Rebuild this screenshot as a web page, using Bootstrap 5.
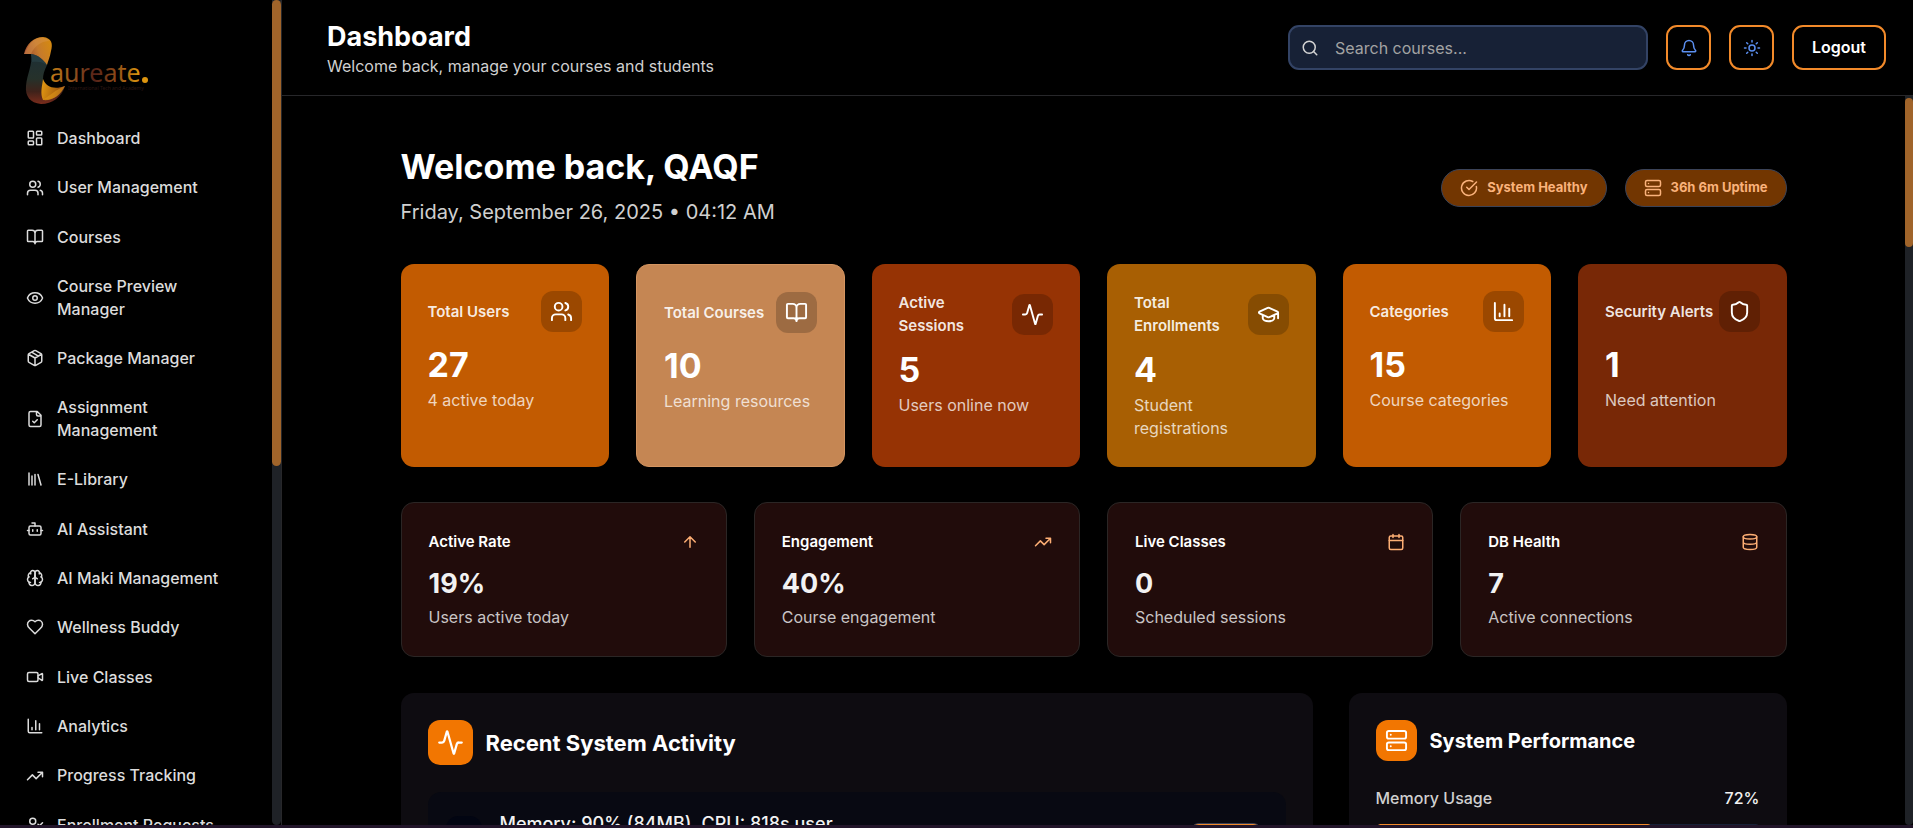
<!DOCTYPE html>
<html lang="en" data-bs-theme="dark">
<head>
<meta charset="utf-8">
<meta name="viewport" content="width=device-width, initial-scale=1">
<title>Dashboard</title>
<link href="https://cdn.jsdelivr.net/npm/bootstrap@5.3.0/dist/css/bootstrap.min.css" rel="stylesheet">
<style>
  body { background: #000; color: #f2f2f2; font: 400 16px/23px Inter, "Liberation Sans", sans-serif; }
  h1, h2, h3, p { margin: 0; }
  svg.ico { width: 18px; height: 18px; flex: none; fill: none; stroke: currentColor; stroke-width: 2; stroke-linecap: round; stroke-linejoin: round; }
  .base-strip { height: 3px; background: #22152a; }
  .min-h-zero { min-height: 0; }
  .gap-bar { gap: 18px; }

  .sidebar { width: 282px; border-right: 1px solid #27272a; }
  .brand { padding: 36px 24px 13px; }
  .side-nav { padding: 0 20px 0 26px; }
  .side-link { display: flex; align-items: center; gap: 13px; padding: 9px 0; margin-bottom: 9px; color: #dcdcdc; font-weight: 500; font-size: 16px; line-height: 1.4; text-decoration: none; }
  .side-link:hover { color: #fff; }
  .track { background: #1f2227; border-radius: 0 0 5px 5px; }
  .track-side { width: 9px; }
  .track-main { width: 8px; padding-top: 2px; }
  .thumb { background: #a0642a; border-radius: 5px; height: 466px; }
  .track-main .thumb { height: 149px; }

  .topbar { height: 96px; padding: 0 27px 0 45px; border-bottom: 1px solid #27272a; }
  .page-name { font-size: 27px; line-height: 36px; font-weight: 700; }
  .page-hint { line-height: 22px; }
  .muted { color: #d0d0d0; }
  .search-box { width: 360px; }
  .search-box svg { left: 13px; top: 14px; color: #d4d4d4; }
  .search-input { height: 45px; padding: 0 14px 0 45px; border: 2px solid #334365; border-radius: 11px; background: #172136; color: #eee; font-size: 16px; }
  .search-input::placeholder { color: #a3a3a3; }
  .btn-line { height: 45px; min-width: 45px; padding: 0; border: 2px solid #f28a2a; border-radius: 11px; color: #5b8ff0; }
  .btn-line.wide { padding: 0 18px 2px; color: #fff; font-weight: 600; font-size: 16px; }

  .page-body { max-width: 1440px; padding: 0 27px; }
  .hero { padding: 51px 0 36px; }
  .hero h2 { font-size: 34px; line-height: 40px; font-weight: 700; }
  .hero p { font-size: 20px; line-height: 32px; margin-top: 9px; }
  .status { height: 38px; padding: 0 18px; gap: 9px; border: 1px solid #3b4358; border-radius: 19px; background: #723601; color: #fab27b; font-size: 13px; font-weight: 700; }

  .stat-grid { display: grid; grid-template-columns: repeat(6, 1fr); gap: 27px; margin-bottom: 35px; }
  .mini-grid { display: grid; grid-template-columns: repeat(4, 1fr); gap: 27px; margin-bottom: 36px; }
  .panel-grid { display: grid; grid-template-columns: repeat(3, 1fr); gap: 36px; }
  .span-two { grid-column: span 2; }
  .tile { border-radius: 13px; padding: 27px; }
  .tile h3, .mini h3 { font-size: 15px; line-height: 23px; font-weight: 600; }
  .tile h3 { color: rgba(255,255,255,.9); }
  .tile .figure { font-size: 34px; line-height: 40px; font-weight: 700; color: #fff; margin: 13px 0 4px; }
  .tile .note { color: rgba(255,255,255,.75); }
  .tile-icon { width: 41px; height: 41px; border-radius: 12px; background: rgba(0,0,0,.2); color: #fff; flex: none; }
  .tile-icon svg { width: 23px; height: 23px; }
  .orange { background: #c25b01; }
  .peach { background: #c58653; border: 1px solid #d49561; }
  .rust { background: #963304; }
  .amber { background: #a85f03; }
  .brown { background: #782806; }
  .mini { border: 1px solid #2b2625; border-radius: 13px; padding: 27px; background: #210c0b; }
  .mini svg { color: #fdae74; }
  .mini .figure { font-size: 27px; line-height: 36px; font-weight: 700; margin: 13px 0 4px; }
  .mini .note { color: #c9c5c5; }

  .panel { background: #0e0c11; border-radius: 13px; padding: 27px; }
  .panel h3 { font-size: 22px; line-height: 32px; font-weight: 700; }
  .panel h3.lesser { font-size: 20px; }
  .panel-icon { width: 45px; height: 45px; border-radius: 12px; background: #f27601; color: #fff; flex: none; }
  .panel-icon svg { width: 27px; height: 27px; }
  .panel-icon.lesser { width: 41px; height: 41px; }
  .panel-icon.lesser svg { width: 23px; height: 23px; }
  .gap-title { gap: 13px; }
  .event { background: #080912; border-radius: 13px; padding: 18px 24px 18px 18px; margin-top: 27px; gap: 18px; }
  .event-icon { width: 36px; height: 36px; border-radius: 12px; background: #020512; margin-top: 6px; color: #5b8ff0; }
  .event-text { font-size: 18px; line-height: 27px; font-weight: 500; }
  .event-tag { margin-top: 13px; padding: 2px 12px; border: 1px solid #3b4358; border-radius: 9px; background: #f28a2a; color: #fff; font-size: 13px; font-weight: 600; }
  .meter-head { margin-top: 26px; font-weight: 500; }
  .meter { height: 9px; margin-top: 14px; background: #172136; border-radius: 5px; }
  .meter .progress-bar { background: #f28a2a; border-radius: 5px; }
</style>
</head>
<body class="vh-100 overflow-hidden d-flex flex-column">

<svg class="d-none" aria-hidden="true">
  <symbol id="i-grid" viewBox="0 0 24 24"><rect x="3" y="3" width="7" height="9" rx="1"/><rect x="14" y="3" width="7" height="5" rx="1"/><rect x="14" y="12" width="7" height="9" rx="1"/><rect x="3" y="16" width="7" height="5" rx="1"/></symbol>
  <symbol id="i-users" viewBox="0 0 24 24"><path d="M16 21v-2a4 4 0 0 0-4-4H6a4 4 0 0 0-4 4v2"/><circle cx="9" cy="7" r="4"/><path d="M22 21v-2a4 4 0 0 0-3-3.87M16 3.13a4 4 0 0 1 0 7.75"/></symbol>
  <symbol id="i-book" viewBox="0 0 24 24"><path d="M12 7v14M3 18a1 1 0 0 1-1-1V4a1 1 0 0 1 1-1h5a4 4 0 0 1 4 4 4 4 0 0 1 4-4h5a1 1 0 0 1 1 1v13a1 1 0 0 1-1 1h-6a3 3 0 0 0-3 3 3 3 0 0 0-3-3z"/></symbol>
  <symbol id="i-eye" viewBox="0 0 24 24"><path d="M2.062 12.348a1 1 0 0 1 0-.696 10.75 10.75 0 0 1 19.876 0 1 1 0 0 1 0 .696 10.75 10.75 0 0 1-19.876 0"/><circle cx="12" cy="12" r="3"/></symbol>
  <symbol id="i-box" viewBox="0 0 24 24"><path d="M11 21.73a2 2 0 0 0 2 0l7-4A2 2 0 0 0 21 16V8a2 2 0 0 0-1-1.73l-7-4a2 2 0 0 0-2 0l-7 4A2 2 0 0 0 3 8v8a2 2 0 0 0 1 1.73zM12 22V12M3.29 7 12 12l8.71-5M7.5 4.27l9 5.15"/></symbol>
  <symbol id="i-filecheck" viewBox="0 0 24 24"><path d="M15 2H6a2 2 0 0 0-2 2v16a2 2 0 0 0 2 2h12a2 2 0 0 0 2-2V7zM14 2v4a2 2 0 0 0 2 2h4M9 15l2 2 4-4"/></symbol>
  <symbol id="i-library" viewBox="0 0 24 24"><path d="m16 6 4 14M12 6v14M8 8v12M4 4v16"/></symbol>
  <symbol id="i-bot" viewBox="0 0 24 24"><path d="M12 8V4H8"/><rect x="4" y="8" width="16" height="12" rx="2"/><path d="M2 14h2M20 14h2M15 13v2M9 13v2"/></symbol>
  <symbol id="i-brain" viewBox="0 0 24 24"><path d="M12 5a3 3 0 1 0-5.997.125 4 4 0 0 0-2.526 5.77 4 4 0 0 0 .556 6.588A4 4 0 1 0 12 18Z"/><path d="M12 5a3 3 0 1 1 5.997.125 4 4 0 0 1 2.526 5.77 4 4 0 0 1-.556 6.588A4 4 0 1 1 12 18Z"/><path d="M15 13a4.5 4.5 0 0 1-3-4 4.5 4.5 0 0 1-3 4M17.599 6.5a3 3 0 0 0 .399-1.375M6.003 5.125A3 3 0 0 0 6.401 6.5M3.477 10.896a4 4 0 0 1 .585-.396M19.938 10.5a4 4 0 0 1 .585.396M6 18a4 4 0 0 1-1.967-.516M19.967 17.484A4 4 0 0 1 18 18"/></symbol>
  <symbol id="i-heart" viewBox="0 0 24 24"><path d="M19 14c1.49-1.46 3-3.21 3-5.5A5.5 5.5 0 0 0 16.500 3c-1.76 0-3 .5-4.500 2-1.500-1.500-2.740-2-4.500-2A5.500 5.500 0 0 0 2 8.500c0 2.300 1.500 4.050 3 5.500l7 7Z"/></symbol>
  <symbol id="i-video" viewBox="0 0 24 24"><path d="m16 13 5.223 3.482a.5.5 0 0 0 .777-.416V7.870a.5.5 0 0 0-.752-.432L16 10.500"/><rect x="2" y="6" width="14" height="12" rx="2"/></symbol>
  <symbol id="i-chart" viewBox="0 0 24 24"><path d="M3 3v16a2 2 0 0 0 2 2h16M18 17V9M13 17V5M8 17v-3"/></symbol>
  <symbol id="i-trend" viewBox="0 0 24 24"><path d="M22 7 13.500 15.500 8.500 10.500 2 17M16 7h6v6"/></symbol>
  <symbol id="i-userplus" viewBox="0 0 24 24"><path d="M16 21v-2a4 4 0 0 0-4-4H6a4 4 0 0 0-4 4v2"/><circle cx="9" cy="7" r="4"/><path d="m16 11 2 2 4-4"/></symbol>
  <symbol id="i-search" viewBox="0 0 24 24"><circle cx="11" cy="11" r="8"/><path d="m21 21-4.300-4.300"/></symbol>
  <symbol id="i-bell" viewBox="0 0 24 24"><path d="M10.268 21a2 2 0 0 0 3.464 0M3.262 15.326A1 1 0 0 0 4 17h16a1 1 0 0 0 .740-1.673C19.410 13.956 18 12.499 18 8A6 6 0 0 0 6 8c0 4.499-1.411 5.956-2.738 7.326"/></symbol>
  <symbol id="i-sun" viewBox="0 0 24 24"><circle cx="12" cy="12" r="4"/><path d="M12 2v2M12 20v2M4.930 4.930l1.410 1.410M17.660 17.660l1.410 1.410M2 12h2M20 12h2M6.340 17.660l-1.410 1.410M19.070 4.930l-1.410 1.410"/></symbol>
  <symbol id="i-check" viewBox="0 0 24 24"><path d="M21.801 10A10 10 0 1 1 17 3.335M9 11l3 3L22 4"/></symbol>
  <symbol id="i-server" viewBox="0 0 24 24"><rect x="2" y="2" width="20" height="8" rx="2"/><rect x="2" y="14" width="20" height="8" rx="2"/><path d="M6 6h.01M6 18h.01"/></symbol>
  <symbol id="i-pulse" viewBox="0 0 24 24"><path d="M22 12h-2.480a2 2 0 0 0-1.930 1.460l-2.350 8.360a.25.25 0 0 1-.480 0L9.240 2.180a.25.25 0 0 0-.480 0l-2.350 8.360A2 2 0 0 1 4.490 12H2"/></symbol>
  <symbol id="i-cap" viewBox="0 0 24 24"><path d="M21.420 10.922a1 1 0 0 0-.019-1.838L12.830 5.180a2 2 0 0 0-1.660 0L2.600 9.080a1 1 0 0 0 0 1.832l8.570 3.908a2 2 0 0 0 1.660 0zM22 10v6M6 12.500V16a6 3 0 0 0 12 0v-3.500"/></symbol>
  <symbol id="i-shield" viewBox="0 0 24 24"><path d="M20 13c0 5-3.500 7.500-7.660 8.950a1 1 0 0 1-.670-.010C7.500 20.500 4 18 4 13V6a1 1 0 0 1 1-1c2 0 4.500-1.200 6.240-2.720a1.170 1.170 0 0 1 1.520 0C14.510 3.810 17 5 19 5a1 1 0 0 1 1 1z"/></symbol>
  <symbol id="i-up" viewBox="0 0 24 24"><path d="m5 12 7-7 7 7M12 19V5"/></symbol>
  <symbol id="i-cal" viewBox="0 0 24 24"><path d="M8 2v4M16 2v4M3 10h18"/><rect x="3" y="4" width="18" height="18" rx="2"/></symbol>
  <symbol id="i-db" viewBox="0 0 24 24"><ellipse cx="12" cy="5" rx="9" ry="3"/><path d="M3 5v14a9 3 0 0 0 18 0V5M3 12a9 3 0 0 0 18 0"/></symbol>
</svg>

<div class="d-flex flex-grow-1 min-h-zero overflow-hidden">
  <aside class="sidebar d-flex flex-shrink-0 overflow-hidden">
    <div class="flex-grow-1">
      <a class="brand d-block" href="#" aria-label="Laureate">
        <svg class="d-block" width="128" height="69" viewBox="24 36 128 69">
          <defs>
            <linearGradient id="g-top" x1="24" y1="54" x2="52" y2="44" gradientUnits="userSpaceOnUse"><stop offset="0" stop-color="#9b4a34"/><stop offset=".5" stop-color="#c67a2c"/><stop offset="1" stop-color="#d58a10"/></linearGradient>
            <linearGradient id="g-mid" x1="36" y1="54" x2="36" y2="104" gradientUnits="userSpaceOnUse"><stop offset="0" stop-color="#1d2f36"/><stop offset=".5" stop-color="#26312a"/><stop offset=".75" stop-color="#3f221a"/><stop offset="1" stop-color="#7a2c1c"/></linearGradient>
            <linearGradient id="g-tail" x1="42" y1="86" x2="65" y2="92" gradientUnits="userSpaceOnUse"><stop offset="0" stop-color="#e09512"/><stop offset=".6" stop-color="#b0680f"/><stop offset="1" stop-color="#702f1d"/></linearGradient>
            <linearGradient id="g-word" x1="51" y1="0" x2="139" y2="0" gradientUnits="userSpaceOnUse"><stop offset="0" stop-color="#c07a16"/><stop offset=".3" stop-color="#8a4a1e"/><stop offset=".5" stop-color="#552218"/><stop offset=".75" stop-color="#8f4d18"/><stop offset="1" stop-color="#d9940f"/></linearGradient>
          </defs>
          <path d="M31 54 L47 56 L47 65 C44 71 43 75 43 79 C43 88 50 92 65 86 C62 97 52 104 41 104 C30 103 25 96 26 86 C27 74 33 64 31 54Z" fill="url(#g-mid)"/>
          <path d="M24 54 C26 44 34 37 43 37 C52 38 53 44 51 51 C50 57 48 61 47 65 C43 59 38 55 31 54Z" fill="url(#g-top)"/>
          <path d="M28 47 C33 37 44 35 50 41 C42 41 35 45 31 54 H24Z" fill="#d9944b" opacity=".45"/>
          <path d="M31 54 C38 55 43 59 47 65 C43 62 38 61 32 62Z" fill="#2c444a" opacity=".6"/>
          <path d="M43 79 C46 87 54 90 65 86 C60 96 52 101 43 100 C40 93 42 87 43 79Z" fill="url(#g-tail)"/>
          <path d="M44 99 C51 95 55 90 65 86 C60 96 52 101 44 99Z" fill="#dd9419" opacity=".6"/>
          <text x="50" y="82" font-family="Noto Sans" font-size="25" font-weight="400" fill="url(#g-word)">aureate</text>
          <circle cx="145" cy="80" r="3" fill="#dd950f"/>
          <text x="68" y="90" font-family="Noto Sans" font-size="5" fill="#2c1714">International Tech and Academy</text>
        </svg>
      </a>
      <nav class="side-nav" aria-label="Main">
        <a class="side-link" href="#"><svg class="ico"><use href="#i-grid"/></svg>Dashboard</a>
        <a class="side-link" href="#"><svg class="ico"><use href="#i-users"/></svg>User Management</a>
        <a class="side-link" href="#"><svg class="ico"><use href="#i-book"/></svg>Courses</a>
        <a class="side-link" href="#"><svg class="ico"><use href="#i-eye"/></svg><span>Course Preview<br>Manager</span></a>
        <a class="side-link" href="#"><svg class="ico"><use href="#i-box"/></svg>Package Manager</a>
        <a class="side-link" href="#"><svg class="ico"><use href="#i-filecheck"/></svg><span>Assignment<br>Management</span></a>
        <a class="side-link" href="#"><svg class="ico"><use href="#i-library"/></svg>E-Library</a>
        <a class="side-link" href="#"><svg class="ico"><use href="#i-bot"/></svg>AI Assistant</a>
        <a class="side-link" href="#"><svg class="ico"><use href="#i-brain"/></svg>AI Maki Management</a>
        <a class="side-link" href="#"><svg class="ico"><use href="#i-heart"/></svg>Wellness Buddy</a>
        <a class="side-link" href="#"><svg class="ico"><use href="#i-video"/></svg>Live Classes</a>
        <a class="side-link" href="#"><svg class="ico"><use href="#i-chart"/></svg>Analytics</a>
        <a class="side-link" href="#"><svg class="ico"><use href="#i-trend"/></svg>Progress Tracking</a>
        <a class="side-link" href="#"><svg class="ico"><use href="#i-userplus"/></svg>Enrollment Requests</a>
      </nav>
    </div>
    <div class="track track-side flex-shrink-0"><div class="thumb"></div></div>
  </aside>

  <div class="flex-grow-1 d-flex flex-column min-h-zero">
    <header class="topbar d-flex align-items-center justify-content-between flex-shrink-0">
      <div>
        <h1 class="page-name">Dashboard</h1>
        <p class="page-hint muted">Welcome back, manage your courses and students</p>
      </div>
      <div class="d-flex align-items-center gap-bar">
        <div class="search-box position-relative">
          <svg class="ico position-absolute"><use href="#i-search"/></svg>
          <input class="search-input form-control" type="search" aria-label="Search courses" placeholder="Search courses...">
        </div>
        <button class="btn btn-line d-flex align-items-center justify-content-center" type="button" aria-label="Notifications"><svg class="ico"><use href="#i-bell"/></svg></button>
        <button class="btn btn-line d-flex align-items-center justify-content-center" type="button" aria-label="Toggle theme"><svg class="ico"><use href="#i-sun"/></svg></button>
        <button class="btn btn-line wide" type="button">Logout</button>
      </div>
    </header>

    <div class="d-flex flex-grow-1 min-h-zero">
      <main class="flex-grow-1 overflow-hidden">
        <div class="page-body mx-auto">
          <section class="hero d-flex align-items-center justify-content-between">
            <div>
              <h2>Welcome back, QAQF</h2>
              <p class="muted">Friday, September 26, 2025 • 04:12 AM</p>
            </div>
            <div class="d-flex gap-bar">
              <span class="status d-flex align-items-center"><svg class="ico"><use href="#i-check"/></svg>System Healthy</span>
              <span class="status d-flex align-items-center"><svg class="ico"><use href="#i-server"/></svg>36h 6m Uptime</span>
            </div>
          </section>

          <section class="stat-grid">
            <article class="tile orange">
              <div class="d-flex align-items-center justify-content-between"><h3>Total Users</h3><span class="tile-icon d-flex align-items-center justify-content-center"><svg class="ico"><use href="#i-users"/></svg></span></div>
              <div class="figure">27</div><p class="note">4 active today</p>
            </article>
            <article class="tile peach">
              <div class="d-flex align-items-center justify-content-between"><h3>Total Courses</h3><span class="tile-icon d-flex align-items-center justify-content-center"><svg class="ico"><use href="#i-book"/></svg></span></div>
              <div class="figure">10</div><p class="note">Learning resources</p>
            </article>
            <article class="tile rust">
              <div class="d-flex align-items-center justify-content-between"><h3>Active<br>Sessions</h3><span class="tile-icon d-flex align-items-center justify-content-center"><svg class="ico"><use href="#i-pulse"/></svg></span></div>
              <div class="figure">5</div><p class="note">Users online now</p>
            </article>
            <article class="tile amber">
              <div class="d-flex align-items-center justify-content-between"><h3>Total<br>Enrollments</h3><span class="tile-icon d-flex align-items-center justify-content-center"><svg class="ico"><use href="#i-cap"/></svg></span></div>
              <div class="figure">4</div><p class="note">Student registrations</p>
            </article>
            <article class="tile orange">
              <div class="d-flex align-items-center justify-content-between"><h3>Categories</h3><span class="tile-icon d-flex align-items-center justify-content-center"><svg class="ico"><use href="#i-chart"/></svg></span></div>
              <div class="figure">15</div><p class="note">Course categories</p>
            </article>
            <article class="tile brown">
              <div class="d-flex align-items-center justify-content-between"><h3 class="text-nowrap">Security Alerts</h3><span class="tile-icon d-flex align-items-center justify-content-center"><svg class="ico"><use href="#i-shield"/></svg></span></div>
              <div class="figure">1</div><p class="note">Need attention</p>
            </article>
          </section>

          <section class="mini-grid">
            <article class="mini">
              <div class="d-flex align-items-center justify-content-between"><h3>Active Rate</h3><svg class="ico"><use href="#i-up"/></svg></div>
              <div class="figure">19%</div><p class="note">Users active today</p>
            </article>
            <article class="mini">
              <div class="d-flex align-items-center justify-content-between"><h3>Engagement</h3><svg class="ico"><use href="#i-trend"/></svg></div>
              <div class="figure">40%</div><p class="note">Course engagement</p>
            </article>
            <article class="mini">
              <div class="d-flex align-items-center justify-content-between"><h3>Live Classes</h3><svg class="ico"><use href="#i-cal"/></svg></div>
              <div class="figure">0</div><p class="note">Scheduled sessions</p>
            </article>
            <article class="mini">
              <div class="d-flex align-items-center justify-content-between"><h3>DB Health</h3><svg class="ico"><use href="#i-db"/></svg></div>
              <div class="figure">7</div><p class="note">Active connections</p>
            </article>
          </section>

          <section class="panel-grid">
            <article class="panel span-two">
              <div class="d-flex align-items-center gap-title"><span class="panel-icon d-flex align-items-center justify-content-center"><svg class="ico"><use href="#i-pulse"/></svg></span><h3>Recent System Activity</h3></div>
              <div class="event d-flex align-items-start">
                <span class="event-icon"></span>
                <p class="event-text flex-grow-1">Memory: 90% (84MB), CPU: 818s user</p>
                <span class="event-tag">system</span>
              </div>
            </article>
            <article class="panel">
              <div class="d-flex align-items-center gap-title"><span class="panel-icon lesser d-flex align-items-center justify-content-center"><svg class="ico"><use href="#i-server"/></svg></span><h3 class="lesser">System Performance</h3></div>
              <div class="meter-head d-flex justify-content-between"><span class="muted">Memory Usage</span><span>72%</span></div>
              <div class="meter progress" role="progressbar" aria-label="Memory usage" aria-valuenow="72" aria-valuemin="0" aria-valuemax="100"><div class="progress-bar" style="width:72%"></div></div>
            </article>
          </section>
        </div>
      </main>
      <div class="track track-main flex-shrink-0"><div class="thumb"></div></div>
    </div>
  </div>
</div>
<div class="base-strip flex-shrink-0"></div>

<script src="https://cdn.jsdelivr.net/npm/bootstrap@5.3.0/dist/js/bootstrap.bundle.min.js"></script>
</body>
</html>
